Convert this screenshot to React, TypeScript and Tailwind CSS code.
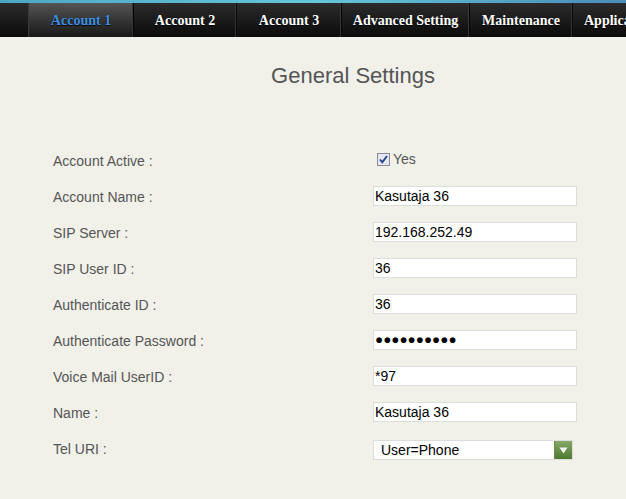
import React from "react";

const tabs = [
  { label: "Account 1", w: 105, active: true },
  { label: "Account 2", w: 103 },
  { label: "Account 3", w: 105 },
  { label: "Advanced Setting", w: 128 },
  { label: "Maintenance", w: 103 },
  { label: "Application", w: 120, last: true },
];

const rows: { label: string; value?: string; kind: "check" | "text" | "pass" | "select" }[] = [
  { label: "Account Active :", kind: "check" },
  { label: "Account Name :", value: "Kasutaja 36", kind: "text" },
  { label: "SIP Server :", value: "192.168.252.49", kind: "text" },
  { label: "SIP User ID :", value: "36", kind: "text" },
  { label: "Authenticate ID :", value: "36", kind: "text" },
  { label: "Authenticate Password :", kind: "pass" },
  { label: "Voice Mail UserID :", value: "*97", kind: "text" },
  { label: "Name :", value: "Kasutaja 36", kind: "text" },
  { label: "Tel URI :", value: "User=Phone", kind: "select" },
];

function Field({ row }: { row: (typeof rows)[number] }) {
  if (row.kind === "check") {
    return (
      <div className="flex items-center h-[20px] pl-[4px] -mt-[2px]">
        <div className="w-[13px] h-[13px] border border-[#8c8c96] bg-[#e4e6f0] flex items-center justify-center">
          <svg width="11" height="11" viewBox="0 0 11 11">
            <path d="M2 5.5 L4.3 8.2 L9 2" fill="none" stroke="#23408e" strokeWidth="1.8" />
          </svg>
        </div>
        <span className="ml-[3px] text-[14px] text-[#555] pt-[1px]">Yes</span>
      </div>
    );
  }
  if (row.kind === "select") {
    return (
      <div className="w-[200px] h-[20px] mt-[4px] bg-white border border-[#dcdcdc] flex items-center relative">
        <span className="pl-[7px] text-[14px] text-black">{row.value}</span>
        <div className="absolute right-[0px] top-[0px] w-[18px] h-[18px] bg-gradient-to-b from-[#88a866] to-[#4c7a2c] flex items-center justify-center border-l border-[#6a8a4a]">
          <svg width="9" height="7" viewBox="0 0 9 7">
            <path d="M0.5 0.5 L8.5 0.5 L4.5 6.5 Z" fill="#f4f4f4" />
          </svg>
        </div>
      </div>
    );
  }
  return (
    <div className="w-[204px] h-[20px] bg-white border border-[#dcdcdc] flex items-center pl-[1px]">
      {row.kind === "pass" ? (
        <span className="text-[13.5px] text-black leading-none">●●●●●●●●●●</span>
      ) : (
        <span className="text-[14px] text-black">{row.value}</span>
      )}
    </div>
  );
}

export default function App() {
  return (
    <div className="w-[626px] h-[499px] overflow-hidden bg-[#f1f1ea] font-['Liberation_Sans',Arial,sans-serif]">
      <div className="h-[3px] bg-gradient-to-r from-[#4ea6c6] via-[#66c6d9] to-[#4a8db9]" />
      <div className="h-[34px] bg-gradient-to-b from-[#2c2c2c] to-[#0b0b0b] flex whitespace-nowrap">
        <div className="w-[29px] shrink-0 border-r border-[#3a3a3a]" />
        {tabs.map((t) => (
          <div
            key={t.label}
            style={{ width: t.w }}
            className={
              "shrink-0 flex items-center border-r border-[#050505] shadow-[inset_-1px_0_0_#363636] font-['Liberation_Serif',Georgia,serif] font-bold text-[14px] [text-shadow:0_1px_1px_#000] " +
              (t.last ? "justify-start pl-[11px] " : "justify-center ") +
              (t.active
                ? "bg-gradient-to-b from-[#555555] to-[#191919] text-[#3d8fe0]"
                : "text-white")
            }
          >
            {t.label}
          </div>
        ))}
      </div>
      <div className="text-center text-[22px] text-[#555] pt-[26px] pl-[80px] leading-[26px]">General Settings</div>
      <div className="pt-[53px] pl-[53px]">
        {rows.map((r) => (
          <div key={r.label} className="flex items-center h-[36px]">
            <div className="w-[320px] text-[14px] text-[#555] pt-[3px]">{r.label}</div>
            <Field row={r} />
          </div>
        ))}
      </div>
    </div>
  );
}
